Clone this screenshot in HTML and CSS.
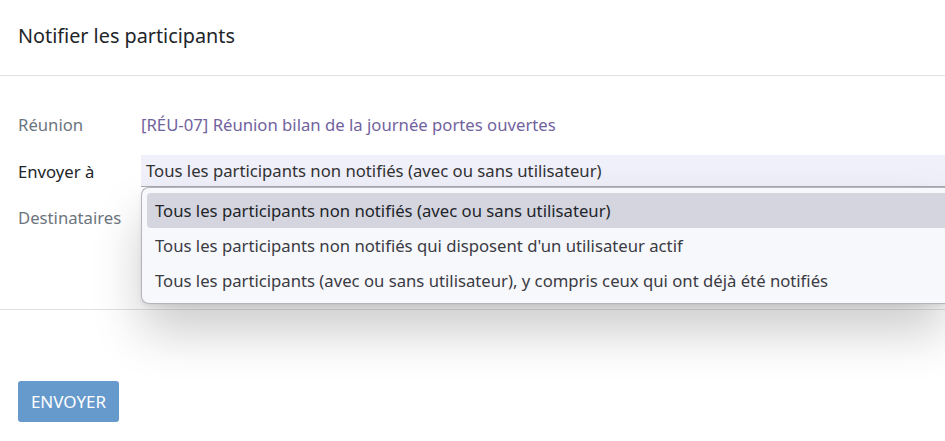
FILE: index.html
```html
<!DOCTYPE html>
<html lang="fr">
<head>
<meta charset="utf-8">
<title>Notifier les participants</title>
<link rel="stylesheet" href="styles.css">
</head>
<body>
<div class="dialog">
  <header class="header">
    <h1 class="title">Notifier les participants</h1>
  </header>
  <main class="content">
    <div class="field">
      <span class="label muted">Réunion</span>
      <span class="value link">[RÉU-07] Réunion bilan de la journée portes ouvertes</span>
    </div>
    <div class="field">
      <span class="label">Envoyer à</span>
      <div class="select-wrap">
        <div class="select">Tous les participants non notifiés (avec ou sans utilisateur)</div>
        <ul class="menu">
          <li class="option selected">Tous les participants non notifiés (avec ou sans utilisateur)</li>
          <li class="option">Tous les participants non notifiés qui disposent d'un utilisateur actif</li>
          <li class="option">Tous les participants (avec ou sans utilisateur), y compris ceux qui ont déjà été notifiés</li>
        </ul>
      </div>
    </div>
    <div class="field">
      <span class="label muted">Destinataires</span>
      <span class="value"></span>
    </div>
  </main>
  <footer class="footer">
    <button class="btn">ENVOYER</button>
  </footer>
</div>
</body>
</html>
```

FILE: styles.css
```css
* { box-sizing: border-box; }
html, body { margin: 0; padding: 0; background: #fff; }
body {
  font-family: "Noto Sans", "Open Sans", sans-serif;
  font-size: 16.7px;
  color: #212529;
  overflow: hidden;
}
.dialog { width: 945px; height: 441px; overflow: hidden; }
.header {
  height: 76px;
  border-bottom: 1px solid #dee2e6;
  display: flex;
  align-items: center;
  padding: 0 18px 4px;
}
.title {
  margin: 0;
  font-size: 19.8px;
  font-weight: 400;
  color: #212529;
}
.content {
  padding: 33px 0 0 18px;
  height: 234px;
  border-bottom: 1px solid #dee2e6;
}
.field {
  display: grid;
  grid-template-columns: 123px 1fr;
  align-items: center;
  min-height: 31px;
  margin-bottom: 15px;
}
.label { color: #212529; white-space: nowrap; }
.muted { color: #6c757d; }
.link { color: #71639e; white-space: nowrap; }
.select-wrap { position: relative; }
.select {
  height: 32px;
  line-height: 31px;
  padding-left: 5px;
  background: #f0f0fb;
  border-bottom: 1px solid #a9a9b0;
  color: #333;
  white-space: nowrap;
  overflow: hidden;
}
.menu {
  position: absolute;
  top: 32px;
  left: 0;
  right: 0;
  margin: 0;
  padding: 5px 0 5px 5px;
  list-style: none;
  background: #f7f8fb;
  border: 1px solid #b4b4bc;
  border-right: none;
  border-radius: 8px 0 0 8px;
  box-shadow: 0 28px 50px rgba(0, 0, 0, 0.2), 0 2px 4px rgba(0,0,0,0.08);
  z-index: 10;
}
.option {
  height: 35px;
  line-height: 35px;
  padding-left: 8px;
  color: #3b3b44;
  white-space: nowrap;
  overflow: hidden;
  border-radius: 4px 0 0 4px;
}
.option.selected { background: #d5d5e0; color: #212529; }
.footer { padding: 71px 0 0 18px; }
.btn {
  font-family: inherit;
  font-size: 17px;
  color: #fff;
  background: #6699cc;
  border: none;
  border-radius: 3px;
  width: 101px;
  height: 41px;
  padding: 0;
}
```
